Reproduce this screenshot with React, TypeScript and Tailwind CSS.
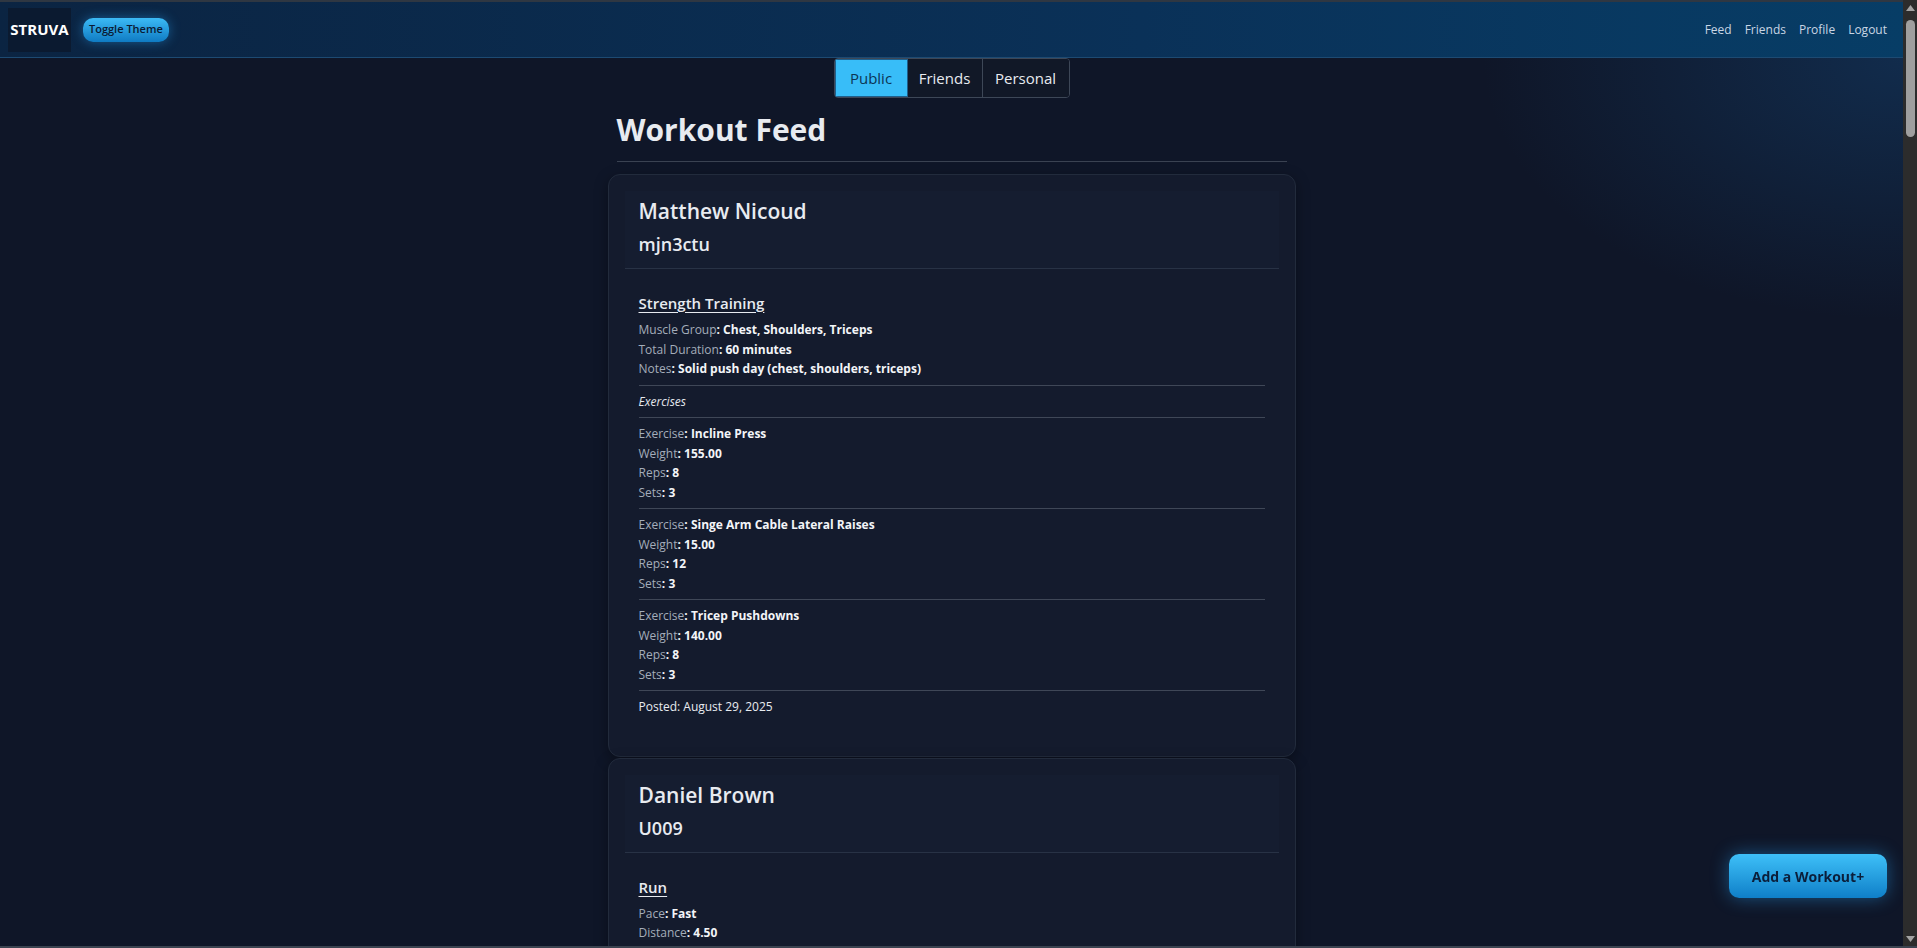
import React from "react";

type Field = { label: string; value: string };

function Line({ f }: { f: Field }) {
  return (
    <div className="text-[12px] leading-[19.5px]">
      <span className="text-[#a4adba]">{f.label}</span>
      <span className="font-bold text-[#f3f5f8]">: {f.value}</span>
    </div>
  );
}

function Hr() {
  return <div className="my-[6px] h-px bg-[#3f4757]" />;
}

type Workout = {
  name: string;
  handle: string;
  type: string;
  fields: Field[];
  exercises?: Field[][];
  posted: string;
};

function Card({ w }: { w: Workout }) {
  return (
    <div className="rounded-[12px] border border-[#222b3c] bg-[#141b2d] p-4 shadow-[0_4px_14px_rgba(0,0,0,0.35)]">
      <div className="border-b border-[#283245] bg-[#151d30] px-[14px] pb-[9px] pt-[3px]">
        <div className="text-[21px] font-semibold leading-[35px] text-[#e8ebf0]">{w.name}</div>
        <div className="text-[18px] font-semibold leading-[30px] text-[#e8ebf0]">{w.handle}</div>
      </div>
      <div className="px-[14px] pb-[23px] pt-[22px]">
        <div className="mb-[5px] text-[15px] font-semibold leading-[24px] text-[#e8ebf0] underline underline-offset-[3px]">
          {w.type}
        </div>
        {w.fields.map((f) => (
          <Line key={f.label} f={f} />
        ))}
        {w.exercises && (
          <>
            <Hr />
            <div className="text-[12px] italic leading-[19.5px] text-[#e5e8ee]">Exercises</div>
            {w.exercises.map((ex, i) => (
              <div key={i}>
                <Hr />
                {ex.map((f) => (
                  <Line key={f.label} f={f} />
                ))}
              </div>
            ))}
          </>
        )}
        <Hr />
        <div className="text-[12px] leading-[19.5px] text-[#e8ebf0]">Posted: {w.posted}</div>
      </div>
    </div>
  );
}

const workouts: Workout[] = [
  {
    name: "Matthew Nicoud",
    handle: "mjn3ctu",
    type: "Strength Training",
    fields: [
      { label: "Muscle Group", value: "Chest, Shoulders, Triceps" },
      { label: "Total Duration", value: "60 minutes" },
      { label: "Notes", value: "Solid push day (chest, shoulders, triceps)" },
    ],
    exercises: [
      [
        { label: "Exercise", value: "Incline Press" },
        { label: "Weight", value: "155.00" },
        { label: "Reps", value: "8" },
        { label: "Sets", value: "3" },
      ],
      [
        { label: "Exercise", value: "Singe Arm Cable Lateral Raises" },
        { label: "Weight", value: "15.00" },
        { label: "Reps", value: "12" },
        { label: "Sets", value: "3" },
      ],
      [
        { label: "Exercise", value: "Tricep Pushdowns" },
        { label: "Weight", value: "140.00" },
        { label: "Reps", value: "8" },
        { label: "Sets", value: "3" },
      ],
    ],
    posted: "August 29, 2025",
  },
  {
    name: "Daniel Brown",
    handle: "U009",
    type: "Run",
    fields: [
      { label: "Pace", value: "Fast" },
      { label: "Distance", value: "4.50" },
      { label: "Time", value: "38 minutes" },
      { label: "Notes", value: "Evening tempo run" },
    ],
    posted: "August 28, 2025",
  },
];

function Scrollbar() {
  return (
    <div className="flex w-[14px] shrink-0 flex-col items-center bg-[#2c2c2c] pb-[4px] pt-[5px]">
      <svg width="9" height="6" viewBox="0 0 9 6" className="shrink-0">
        <polygon points="4.5,0 9,6 0,6" fill="#a3a3a3" />
      </svg>
      <div className="mt-[9px] h-[117px] w-[9px] shrink-0 rounded-full bg-[#9f9f9f]" />
      <div className="flex-1" />
      <svg width="9" height="6" viewBox="0 0 9 6" className="shrink-0">
        <polygon points="0,0 9,0 4.5,6" fill="#a3a3a3" />
      </svg>
    </div>
  );
}

export default function App() {
  return (
    <div className="flex h-screen overflow-hidden border-b-2 border-[#3b4350] bg-[#0f1628] font-['Open_Sans',sans-serif] text-[#e8ebf0]">
      <div className="min-w-0 flex-1 overflow-hidden bg-[radial-gradient(ellipse_420px_260px_at_100%_60px,rgba(20,70,120,0.45),transparent)]">
        <nav className="flex h-[58px] items-center justify-between border-t-2 border-b border-t-[#2f3742] border-b-[#1d4a72] bg-[linear-gradient(90deg,#0b2442,#0a3158_60%,#073d66)] pl-2 pr-[16px]">
          <div className="flex items-center gap-3">
            <div className="flex h-[44px] w-[63px] items-center justify-center bg-[#0b1a30] text-[15px] font-bold text-white">
              STRUVA
            </div>
            <button className="h-[24px] rounded-[10px] bg-[linear-gradient(180deg,#3cbaf5,#0f7bc3)] px-[6px] text-[11px] font-semibold text-[#0a1a33] shadow-[0_0_12px_rgba(40,160,240,0.45)]">
              Toggle Theme
            </button>
          </div>
          <div className="flex items-center gap-[13px] text-[12px] text-[#c9d6e4]">
            <span>Feed</span>
            <span>Friends</span>
            <span>Profile</span>
            <span>Logout</span>
          </div>
        </nav>

        <main className="mx-auto w-[688px] pb-10">
          <div className="flex justify-center">
            <div className="flex h-[40px] overflow-hidden rounded-[4px] border border-[#3d4757] text-[15px]">
              <div className="flex w-[73px] items-center justify-center border border-[#1f5f8c] bg-[#38bdf8] text-[#0c3554]">
                Public
              </div>
              <div className="flex w-[75px] items-center justify-center border-r border-[#3d4757] bg-[#111827] text-[#e8ebf0]">
                Friends
              </div>
              <div className="flex w-[86px] items-center justify-center bg-[#111827] text-[#e8ebf0]">
                Personal
              </div>
            </div>
          </div>
          <div className="mx-[9px] mt-[10px] border-b border-[#3a4252] pb-[9px]">
            <h1 className="text-[30px] font-bold leading-[44px] text-[#e8ebf0]">Workout Feed</h1>
          </div>
          <div className="mt-[12px] flex flex-col gap-[1px]">
            {workouts.map((w) => (
              <Card key={w.name} w={w} />
            ))}
          </div>
        </main>
      </div>
      <Scrollbar />

      <button className="fixed bottom-[50px] right-[30px] h-[44px] w-[158px] rounded-[10px] bg-[linear-gradient(180deg,#3ec0f8,#0f7fc8)] text-[14px] font-bold text-[#0b1e3a] shadow-[0_0_18px_rgba(40,160,240,0.45)]">
        Add a Workout+
      </button>
    </div>
  );
}
